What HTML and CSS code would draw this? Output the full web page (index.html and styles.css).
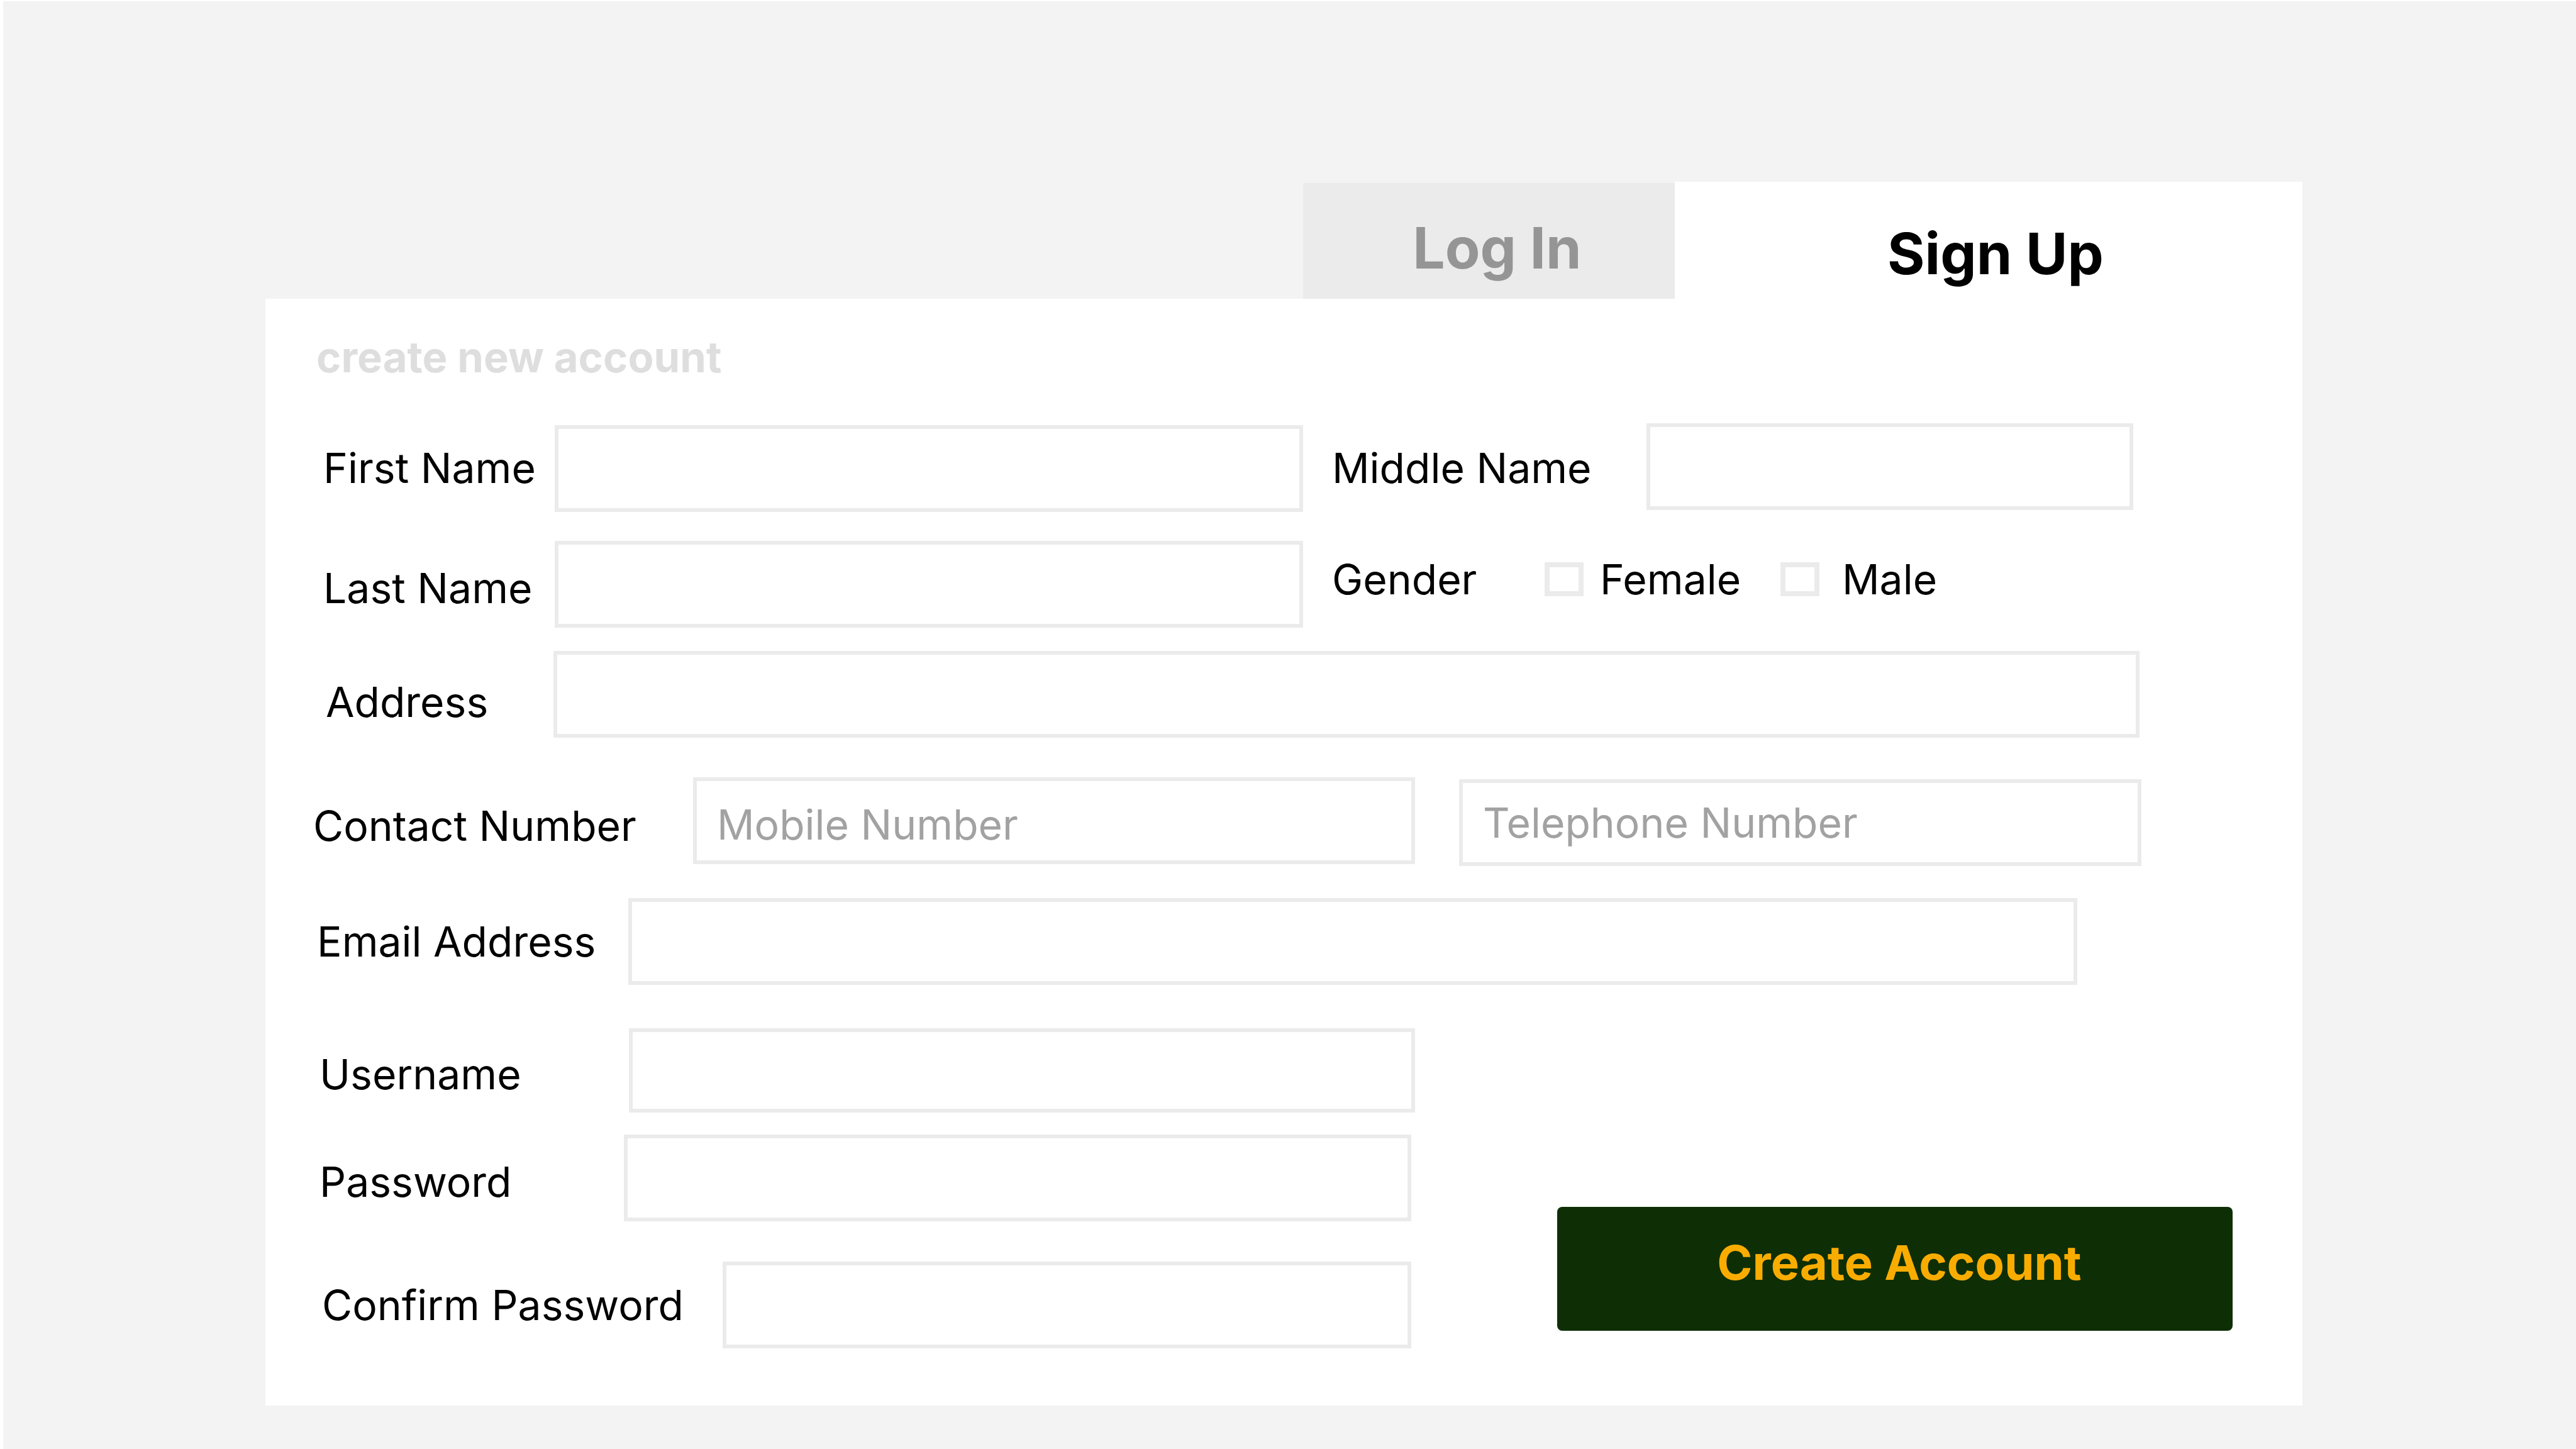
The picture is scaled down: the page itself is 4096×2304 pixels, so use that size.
FILE: index.html
```html
<!DOCTYPE html>
<html lang="en">
<head>
  <meta charset="utf-8">
  <meta name="viewport" content="width=device-width, initial-scale=1">
  <title>Sign Up</title>
  <link rel="stylesheet" href="styles.css">
</head>
<body>
  <main class="page">
    <div class="auth">
      <nav class="tabs" aria-label="Account">
        <button class="tab tab--login" type="button">Log In</button>
        <button class="tab tab--signup" type="button" aria-current="page">Sign Up</button>
      </nav>

      <form class="card">
        <h1 class="card__title">create new account</h1>

        <div class="row row--first">
          <label class="label" for="first-name">First Name</label>
          <input class="field field--end" id="first-name" type="text">
          <label class="label label--second" for="middle-name">Middle Name</label>
          <input class="field field--start" id="middle-name" type="text">
        </div>

        <div class="row row--last">
          <label class="label label--low" for="last-name">Last Name</label>
          <input class="field" id="last-name" type="text">
          <div class="gender" role="group" aria-labelledby="gender-label">
            <span class="gender__label" id="gender-label">Gender</span>
            <label class="choice"><input class="choice__box" type="checkbox" name="gender" value="female">Female</label>
            <label class="choice choice--wide"><input class="choice__box" type="checkbox" name="gender" value="male">Male</label>
          </div>
        </div>

        <div class="row row--address">
          <label class="label label--lowest" for="address">Address</label>
          <input class="field" id="address" type="text">
        </div>

        <div class="row row--contact">
          <label class="label label--low" for="mobile">Contact Number</label>
          <input class="field field--start field--low" id="mobile" type="tel" placeholder="Mobile Number">
          <input class="field field--end" id="telephone" type="tel" placeholder="Telephone Number" aria-label="Telephone Number">
        </div>

        <div class="row row--email">
          <label class="label" for="email">Email Address</label>
          <input class="field" id="email" type="email">
        </div>

        <div class="account">
          <div class="account__fields">
            <div class="row row--username">
              <label class="label label--low" for="username">Username</label>
              <input class="field field--short" id="username" type="text">
            </div>
            <div class="row row--password">
              <label class="label label--low" for="password">Password</label>
              <input class="field" id="password" type="password">
            </div>
            <div class="row row--confirm">
              <label class="label" for="confirm">Confirm Password</label>
              <input class="field" id="confirm" type="password">
            </div>
          </div>
          <button class="submit" type="submit">Create Account</button>
        </div>
      </form>
    </div>
  </main>
</body>
</html>
```
FILE: styles.css
```css
*,
*::before,
*::after {
  box-sizing: border-box;
}

body {
  margin: 0;
  background: #f3f3f3;
  color: #000;
  font-family: Inter, "Open Sans", sans-serif;
  font-size: 66px;
  line-height: 64px;
}

input,
button {
  margin: 0;
  font: inherit;
  color: inherit;
}

.page {
  display: grid;
  grid-template-columns: 417fr 3239fr 435fr;
  align-content: start;
  min-height: 100vh;
  padding: 287px 0 68px;
  border-top: 2px solid #fff;
  border-left: 5px solid #fff;
}

.auth {
  grid-column: 2;
  min-width: 0;
}

/* Tabs */
.tabs {
  display: grid;
  grid-template-columns: 1650fr 591fr 998fr;
  align-items: end;
}

.tab {
  border: 0;
  font-size: 91px;
  font-weight: 700;
  line-height: 96px;
}

.tab--login {
  grid-column: 2;
  height: 184px;
  padding: 22px 0 0 26px;
  background: #ebebeb;
  color: #959595;
}

.tab--signup {
  height: 186px;
  padding: 42px 0 0 22px;
  background: #fff;
}

/* Card */
.card {
  padding: 61px 0 91px;
  background: #fff;
}

.card__title {
  margin: 0 0 73px;
  padding-left: 81px;
  color: #dedede;
  font-size: 67px;
  font-weight: 700;
}

.row {
  display: grid;
  align-items: center;
}

.row--first,
.row--last {
  grid-template-columns: 368px 1190fr 546px 774fr;
  padding: 0 269px 0 92px;
}

.row--first {
  height: 141px;
}

.row--last {
  margin-top: 46px;
}

.row--address {
  grid-template-columns: 362px 1fr;
  margin-top: 37px;
  padding: 0 259px 0 96px;
}

.row--contact {
  grid-template-columns: 604px 1148fr 70px 1085fr;
  height: 141px;
  margin-top: 63px;
  padding: 0 256px 0 76px;
}

.row--contact .field--end {
  grid-column: 4;
}

.row--email {
  grid-template-columns: 495px 1fr;
  margin-top: 51px;
  padding: 0 358px 0 82px;
}

.row--username {
  grid-template-columns: 492px 1fr;
  padding-left: 86px;
}

.row--password {
  grid-template-columns: 484px 1fr;
  margin-top: 35px;
  padding: 0 6px 0 86px;
}

.row--confirm {
  grid-template-columns: 637px 1fr;
  margin-top: 64px;
  padding: 0 6px 0 90px;
}

/* Labels and fields */
.label {
  white-space: nowrap;
}

.label--second {
  padding-left: 46px;
}

.label--low {
  padding-top: 12px;
}

.label--lowest {
  padding-top: 24px;
}

.field {
  width: 100%;
  min-width: 0;
  height: 138px;
  padding: 0 32px;
  border: 6px solid #ebebeb;
  border-radius: 0;
  background: #fff;
}

.field--short {
  height: 134px;
}

.field--start {
  align-self: start;
}

.field--end {
  align-self: end;
}

.field--low {
  padding-top: 12px;
}

.field::placeholder {
  color: #a2a2a2;
  opacity: 1;
}

/* Gender choices */
.gender {
  display: flex;
  grid-column: 3 / 5;
  align-items: center;
  padding: 0 0 16px 46px;
}

.gender__label {
  width: 338px;
}

.choice {
  display: flex;
  align-items: center;
  gap: 26px;
  min-width: 375px;
}

.choice--wide {
  gap: 36px;
}

.choice__box {
  flex: none;
  width: 62px;
  height: 54px;
  border: 8px solid #ebebeb;
  background: #fff;
  appearance: none;
}

/* Account details and submit */
.account {
  display: grid;
  grid-template-columns: 1828fr 1411fr;
  align-items: end;
  margin-top: 69px;
}

.submit {
  height: 197px;
  margin: 0 111px 28px 226px;
  padding: 0 0 22px 14px;
  border: 0;
  border-radius: 8px;
  background: #0e2f05;
  color: #f9ac00;
  font-size: 76px;
  font-weight: 700;
}
```
